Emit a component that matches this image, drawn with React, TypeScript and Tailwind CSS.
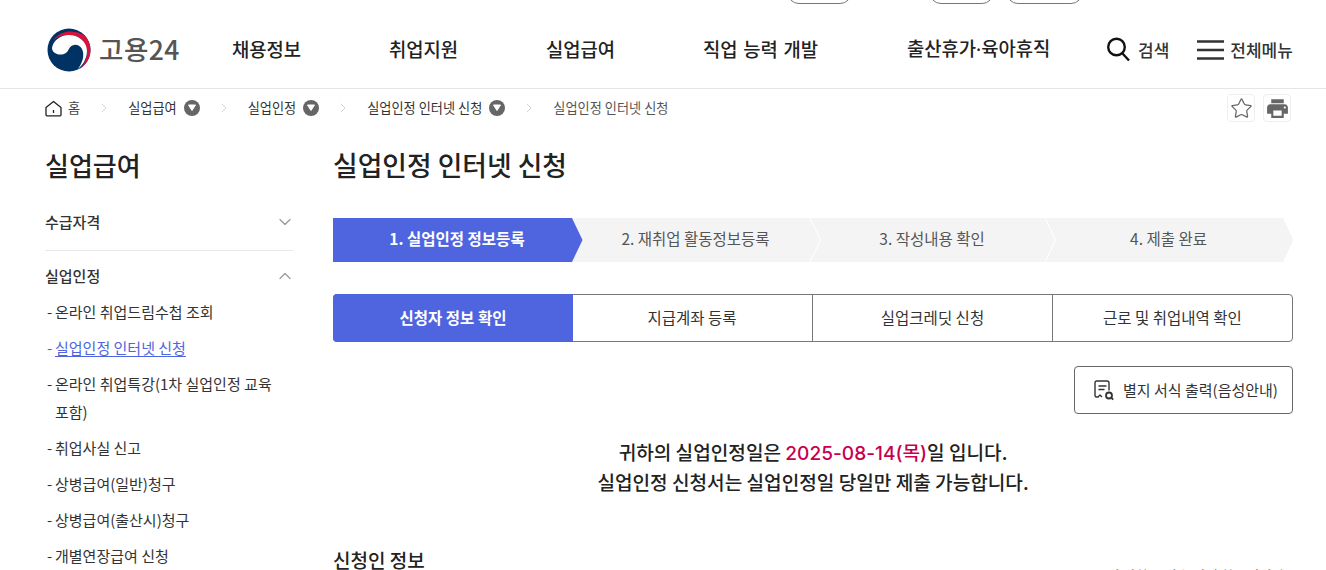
import { ChevronDown, ChevronRight, ChevronUp, Star } from "lucide-react";
import { MdPrint } from "react-icons/md";

const font = "font-['Noto_Sans_CJK_KR','Noto_Sans',sans-serif]";

const crumbs = [
  { label: "실업급여", more: true },
  { label: "실업인정", more: true },
  { label: "실업인정 인터넷 신청", more: true },
  { label: "실업인정 인터넷 신청", more: false },
];

const steps = [
  { label: "1. 실업인정 정보등록", width: "w-[239px]" },
  { label: "2. 재취업 활동정보등록", width: "w-[238px]" },
  { label: "3. 작성내용 확인", width: "w-[235px]" },
  { label: "4. 제출 완료", width: "w-[238px]" },
];

const tabs = ["지급계좌 등록", "실업크레딧 신청", "근로 및 취업내역 확인"];

const subMenu = [
  { label: "온라인 취업드림수첩 조회" },
  { label: "실업인정 인터넷 신청", active: true },
  { label: "온라인 취업특강(1차 실업인정 교육 포함)" },
  { label: "취업사실 신고" },
  { label: "상병급여(일반)청구" },
  { label: "상병급여(출산시)청구" },
  { label: "개별연장급여 신청" },
];

function Logo() {
  return (
    <div className="flex w-[185px] shrink-0 items-center gap-[8px]">
      <svg width="44" height="44" viewBox="0 0 44 44">
        <circle cx="22" cy="22" r="21.5" fill="#003264" />
        <path d="M5 14C10 6 17 3.500 24 3.500c5 .3 9 1.500 13 3.500 4 4 6.500 9 6.500 15 0 8-4.500 15.500-11.500 19 5-4 8-10 8-16.500C40 14 32 7 22 7 14 7 8 10 5 14z" fill="#d8123c" />
        <path d="M5 20C6 13 13 7 22 7c10 0 18 7 18 16 0 7-4 14-9 18 4-6 6-11 5-17-1-5-5-8-9-7-5 1-5 5-7 7-3 3-7 3-10 2-3-1-5-3-5-6z" fill="#fff" />
      </svg>
      <span className="text-[26.500px] font-medium leading-none tracking-[0.500px] text-[#555]">고용24</span>
    </div>
  );
}

function Header() {
  return (
    <header className="h-[89px] border-b border-[#e5e5e5]">
      <div className="flex h-[4px] overflow-hidden">
        <span className="ml-[787px] -mt-[26px] h-[30px] w-[65px] shrink-0 rounded-[12px] border border-[#777]" />
        <span className="ml-[77px] -mt-[26px] h-[30px] w-[65px] shrink-0 rounded-[12px] border border-[#777]" />
        <span className="ml-[12px] -mt-[26px] h-[30px] w-[77px] shrink-0 rounded-[12px] border border-[#777]" />
      </div>
      <div className="flex h-[84px] items-center pt-[7px] pl-[47px]">
        <Logo />
        <nav className="flex items-center text-[18.800px] font-medium text-[#222]">
          <a className="w-[69px] whitespace-nowrap">채용정보</a>
          <a className="ml-[88px] w-[68px] whitespace-nowrap">취업지원</a>
          <a className="ml-[89px] w-[69px] whitespace-nowrap">실업급여</a>
          <a className="ml-[88px] w-[115px] whitespace-nowrap [word-spacing:1.500px]">직업 능력 개발</a>
          <a className="ml-[89px] w-[143px] whitespace-nowrap font-['Noto_Sans','Noto_Sans_CJK_KR',sans-serif]">
            출산휴가·육아휴직
          </a>
        </nav>
        <div className="ml-[57px] flex items-center gap-[8px]">
          <svg width="23" height="25" viewBox="0 0 23 25" fill="none" stroke="#111">
            <circle cx="9.500" cy="10" r="8.300" strokeWidth="2.400" />
            <path d="m15.500 16.500 6.500 7" strokeWidth="2.400" />
          </svg>
          <span className="text-[17px] font-medium text-[#333]">검색</span>
        </div>
        <div className="ml-[28px] flex items-center gap-[6px]">
          <svg width="27" height="20" viewBox="0 0 27 20" fill="none" stroke="#333" strokeWidth="2.400">
            <path d="M0 1.500h27M0 10h27M0 18.500h27" />
          </svg>
          <span className="text-[17px] font-medium text-[#333]">전체메뉴</span>
        </div>
      </div>
    </header>
  );
}

function Breadcrumb() {
  return (
    <div className="flex h-[38px] items-center pl-[45px] pr-[35px] text-[13.200px] text-[#444]">
      <svg width="17" height="17" viewBox="0 0 17 17" fill="none" stroke="#222" strokeWidth="1.300">
        <path d="M1 7.500 8.500 1.500 16 7.500V15a.8.8 0 0 1-.8.8H1.800A.8.8 0 0 1 1 15z" strokeLinejoin="round" />
        <path d="M8.500 10v3" />
      </svg>
      <span className="ml-[6px]">홈</span>
      {crumbs.map((c, i) => (
        <div key={i} className="flex items-center">
          <ChevronRight size={16} strokeWidth={1.200} className="ml-[16px] mr-[16px] text-[#ccc]" />
          <span className={c.more ? "text-[#333]" : "text-[#555]"}>{c.label}</span>
          {c.more && (
            <span className="ml-[7px] flex h-[16px] w-[16px] items-center justify-center rounded-full bg-[#666]">
              <svg width="8" height="7" viewBox="0 0 8 7">
                <path d="M0.500 1h7L4 6.500z" fill="#fff" stroke="#fff" strokeLinejoin="round" />
              </svg>
            </span>
          )}
        </div>
      ))}
      <div className="ml-auto flex gap-[8px]">
        <span className="flex h-[28px] w-[28px] items-center justify-center rounded-[4px] border border-[#eee]">
          <Star size={23} strokeWidth={1.300} className="text-[#666]" />
        </span>
        <span className="flex h-[28px] w-[28px] items-center justify-center rounded-[4px] border border-[#eee]">
          <MdPrint size={25} className="text-[#666]" />
        </span>
      </div>
    </div>
  );
}

function Sidebar() {
  return (
    <aside className="w-[248px] shrink-0">
      <h2 className="h-[40px] text-[26px] font-medium leading-[40px] text-[#222]">실업급여</h2>
      <div className="mt-[18px] flex h-[48px] items-center justify-between border-b border-[#e8e8e8] pb-[9px]">
        <span className="text-[15px] font-medium text-[#333]">수급자격</span>
        <ChevronDown size={20} strokeWidth={1.500} className="-mr-[2px] text-[#999]" />
      </div>
      <div className="flex h-[50px] items-center justify-between">
        <span className="text-[15px] font-medium text-[#333]">실업인정</span>
        <ChevronUp size={20} strokeWidth={1.500} className="-mr-[2px] text-[#999]" />
      </div>
      <ul className="-mt-[3px] text-[15px] leading-[28px]">
        {subMenu.map((m) => (
          <li key={m.label} className="mb-[8px] flex pl-[2px]">
            <span className={`w-[8px] shrink-0 ${m.active ? "text-[#4f65e0]" : "text-[#333]"}`}>-</span>
            <span className={`break-keep ${m.active ? "text-[#4f65e0] underline underline-offset-2" : "text-[#333]"}`}>
              {m.label}
            </span>
          </li>
        ))}
      </ul>
    </aside>
  );
}

function Steps() {
  return (
    <div className="flex h-[44px] pr-[10px]">
      {steps.map((s, i) => (
        <div
          key={s.label}
          className={`relative flex items-center justify-center pb-[2px] pl-[9px] text-[15.500px] ${s.width} ${
            i === 0 ? "bg-[#4f65e0] font-bold text-white" : "bg-[#f4f4f4] text-[#555]"
          }`}
        >
          <span className="relative z-20 whitespace-nowrap">{s.label}</span>
          <svg className="absolute left-full top-0 z-10" width="11" height="44" viewBox="0 0 11 44">
            <path d="M0 0 10.500 22 0 44z" fill={i === 0 ? "#4f65e0" : "#f4f4f4"} />
            {i > 0 && i < 3 && <path d="M0 0 10.500 22 0 44" fill="none" stroke="#fff" strokeWidth="1" />}
          </svg>
        </div>
      ))}
    </div>
  );
}

function Tabs() {
  return (
    <div className="mt-[32px] flex h-[48px] rounded-[4px] border border-[#777] text-[15.500px] text-[#333]">
      <div className="-m-px flex w-[240px] shrink-0 items-center justify-center rounded-[4px] rounded-r-none bg-[#4f65e0] font-bold text-white">
        신청자 정보 확인
      </div>
      {tabs.map((t, i) => (
        <div
          key={t}
          className={`flex w-[240px] shrink-0 items-center justify-center ${i > 0 ? "border-l border-[#777]" : ""}`}
        >
          {t}
        </div>
      ))}
    </div>
  );
}

function Content() {
  return (
    <main className="w-[960px] shrink-0">
      <h1 className="h-[40px] text-[26.800px] font-medium leading-[40px] text-[#222]">실업인정 인터넷 신청</h1>
      <div className="mt-[33px]">
        <Steps />
        <Tabs />
      </div>
      <div className="mt-[24px] flex justify-end">
        <button className="flex h-[48px] w-[219px] items-center justify-center gap-[8px] rounded-[4px] border border-[#666] pl-[4px] text-[15px] text-[#333]">
          <svg width="22" height="22" viewBox="0 0 22 22" fill="none" stroke="#333" strokeWidth="1.400">
            <path d="M5 18H3.500Q2 18 2 16.500V4Q2 2 4 2h10q2 0 2 2v7" strokeLinecap="round" />
            <path d="M5 18l2-2 2 2" strokeLinejoin="round" />
            <path d="M6 7h7M6 10.500h5" strokeLinecap="round" />
            <circle cx="16" cy="16.500" r="3" strokeWidth="1.800" />
            <path d="m18.200 18.700 2 2" strokeWidth="1.800" />
          </svg>
          별지 서식 출력(음성안내)
        </button>
      </div>
      <div className="mt-[23px] text-center text-[19.100px] font-medium leading-[30px] text-[#222]">
        <p className="h-[30px]">
          귀하의 실업인정일은{" "}
          <span className="font-['Inter','Noto_Sans_CJK_KR',sans-serif] text-[#c8004f]">2025-08-14(목)</span>일 입니다.
        </p>
        <p className="h-[30px]">실업인정 신청서는 실업인정일 당일만 제출 가능합니다.</p>
      </div>
      <div className="mt-[48px] flex items-end justify-between">
        <h3 className="text-[19px] font-medium leading-[30px] text-[#222]">신청인 정보</h3>
        <span className="-mb-[10px] text-[13.800px] leading-[20px] text-[#555]">
          (<span className="text-[#c8004f]">*</span> 표시된 사항은 필수 입력 항목입니다.)
        </span>
      </div>
    </main>
  );
}

export default function App() {
  return (
    <div className={`h-[570px] w-[1326px] overflow-hidden bg-white ${font}`}>
      <Header />
      <Breadcrumb />
      <div className="mt-[18px] flex gap-[40px] pl-[45px]">
        <Sidebar />
        <Content />
      </div>
    </div>
  );
}
